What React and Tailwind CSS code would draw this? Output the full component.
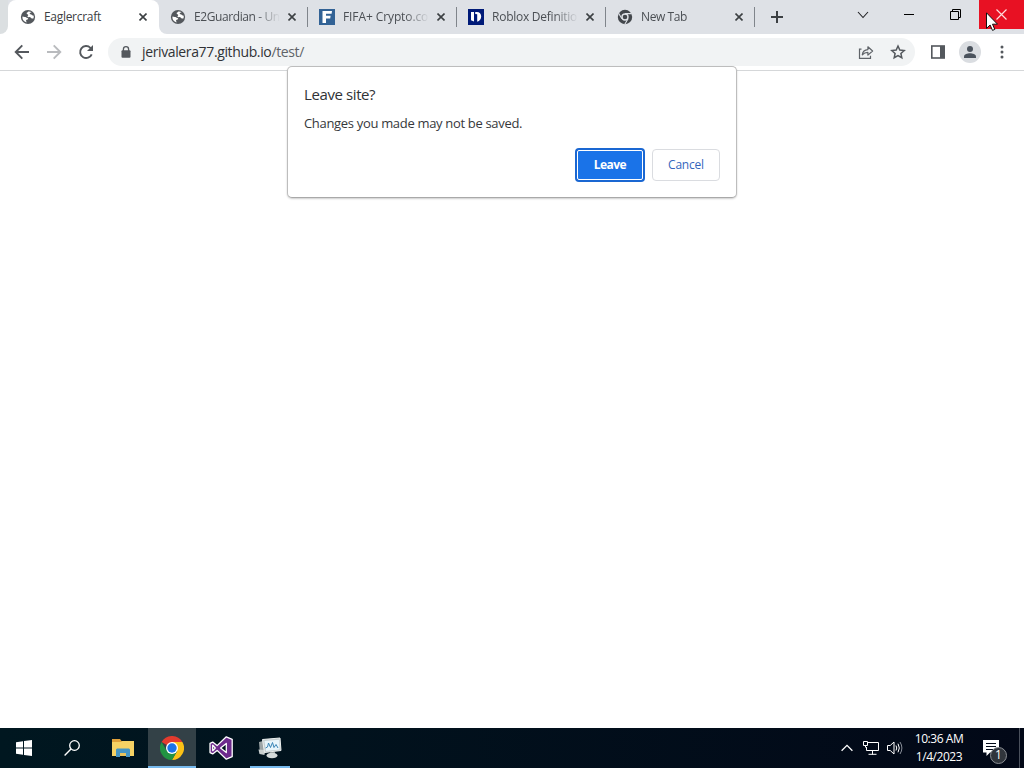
const tabs = [
  { title: 'Eaglercraft', icon: GlobeIcon, active: true, width: 'w-[60px]', fit: 'tracking-[-0.3px]' },
  { title: 'E2Guardian - Un', icon: GlobeIcon, width: 'w-[86px]', fit: 'tracking-[-0.4px]' },
  { title: 'FIFA+ Crypto.co', icon: FifaIcon, width: 'w-[86px]', fit: 'tracking-[-0.1px]' },
  { title: 'Roblox Definitio', icon: DictionaryIcon, width: 'w-[86px]', fit: 'tracking-[-0.25px]' },
  { title: 'New Tab', icon: ChromeMonoIcon, width: 'w-[86px]', fit: 'tracking-[-0.4px]' },
]

function GlobeIcon() {
  return (
    <svg className="w-4 h-4" viewBox="0 0 16 16">
      <circle cx="8" cy="8" r="7.1" fill="#54585d" />
      <path d="M2.5 7.6c1.7.5 2.9.3 3.7 1 .6.5 1.9.2 2 1.2.1.9-1.7.5-2.1 1.4-.3.7.6 1.2.4 2.2C4 12.8 2 10.500 2.500 7.600z" fill="#fff" />
      <path d="M8.300 2.400c1.500-.1 2.500.3 3.300.8-.9.3-1.900.5-1.900 1.300.1.900 1.300.8 2 1.300.6.500 1 .9 2 .9.200 1.100 0 2-.3 2.700-.7.1-1.300.3-2-.1-.9-.5-.9-1.200-2-1.200-.8 0-1 .3-1.700-.2-.8-.7.700-1.100.500-2C8 5.100 6.600 5.300 6.600 4.200c0-.9 1.300-.7 1.700-1.800z" fill="#fff" />
    </svg>
  )
}

function FifaIcon() {
  return (
    <svg className="w-4 h-4" viewBox="0 0 16 16">
      <rect width="16" height="16" fill="#326295" />
      <path d="M3.500 2H13l-.4 2.800H7v2h4.600l-.4 2.600H7V14H3.500z" fill="#fff" />
    </svg>
  )
}

function DictionaryIcon() {
  return (
    <svg className="w-4 h-4" viewBox="0 0 16 16">
      <rect width="16" height="16" fill="#001a78" />
      <path d="M3 3h3v9.500L3 11.300zM7.200 3h1.600c2.800 0 4.400 1.800 4.400 4.500 0 2.600-1.500 4.600-4 5.200V5.200l-2-.3z" fill="#fff" />
    </svg>
  )
}

function ChromeMonoIcon() {
  return (
    <svg className="w-4 h-4" viewBox="0 0 16 16">
      <circle cx="8" cy="8" r="7.200" fill="#43474c" />
      <circle cx="8" cy="8" r="3" fill="#43474c" stroke="#dee1e6" strokeWidth="1.400" />
      <path d="M8 4.600h6.600M4.900 9.800L1.600 4.200M11 9.800l-3.300 5.700" stroke="#dee1e6" strokeWidth="1.100" />
    </svg>
  )
}

function CloseX() {
  return (
    <svg className="w-2 h-2 shrink-0" viewBox="0 0 8 8">
      <path d="M.5.5l7 7M7.5.5l-7 7" stroke="#3c4043" strokeWidth="1.6" />
    </svg>
  )
}

function Tab({ tab }) {
  const Icon = tab.icon
  return (
    <div
      className={
        tab.active
          ? 'relative z-10 flex w-[151px] h-[34px] items-center rounded-t-lg bg-white pl-3 text-[#3c4043]'
          : 'flex w-[149px] h-[34px] items-center pl-[11px] text-[#4b4f54]'
      }
    >
      <Icon />
      <div className="ml-2 w-[89px]">
        <div
          className={`h-4 whitespace-nowrap text-[12px] leading-4 ${tab.width} ${tab.fit} ${
            tab.active ? '' : '[mask-image:linear-gradient(to_right,black_62px,transparent_86px)]'
          }`}
        >
          {tab.title}
        </div>
      </div>
      <div className={tab.active ? 'ml-[6px]' : 'ml-[5px]'}>
        <CloseX />
      </div>
      {!tab.active && <div className="ml-[11px] h-5 w-px bg-[#80858b]" />}
    </div>
  )
}

function TabStrip() {
  return (
    <div className="flex h-[34px] bg-[#dee1e6]">
      <div className="w-2 bg-white">
        <div className="h-full rounded-br-lg bg-[#dbdfe1]" />
      </div>
      <Tab tab={tabs[0]} />
      <div className="-mr-2 w-2 bg-white">
        <div className="h-full rounded-bl-lg bg-[#dee1e6]" />
      </div>
      {tabs.slice(1).map((tab) => (
        <Tab key={tab.title} tab={tab} />
      ))}
      <div className="flex flex-1 items-center pl-4">
        <svg className="w-3 h-3" viewBox="0 0 12 12">
          <path d="M6 0v12M0 6h12" stroke="#3c4043" strokeWidth="2" />
        </svg>
      </div>
      <div className="flex h-[29px]">
        <div className="flex w-[46px] items-center justify-center">
          <svg className="w-3 h-3" viewBox="0 0 12 12">
            <path d="M1 3l5 5.5L11 3" stroke="#202124" strokeWidth="1.1" fill="none" />
          </svg>
        </div>
        <div className="flex w-[46px] items-center justify-center">
          <div className="h-px w-[10px] bg-black" />
        </div>
        <div className="flex w-[46px] items-center justify-center">
          <svg className="w-[11px] h-[11px]" viewBox="0 0 11 11">
            <path d="M.5 2.5h8v8h-8zM2.5 2.5v-2h8v8h-2" stroke="#000" fill="none" />
          </svg>
        </div>
        <div className="relative ml-px flex w-[45px] items-center justify-center bg-[#e81123]">
          <svg className="w-[11px] h-[11px]" viewBox="0 0 11 11">
            <path d="M.5.5l10 10M10.5.5l-10 10" stroke="#ffdcdc" strokeWidth="1.2" />
          </svg>
          <svg className="absolute left-[7px] top-3 z-20 w-3 h-[19px]" viewBox="0 0 12 19">
            <path d="M.5.8v15.6l3.6-3.4 2.4 5.4 2.3-1-2.3-5.2h5z" fill="#fff" stroke="#111" strokeWidth="1" />
          </svg>
        </div>
      </div>
    </div>
  )
}

function Toolbar() {
  return (
    <div className="flex h-[37px] items-center border-b border-[#d5d7d9] bg-white pl-[14px]">
      <svg className="w-4 h-4" viewBox="0 0 16 16">
        <path d="M15 8H2M8.3 1.4L1.7 8l6.6 6.6" stroke="#54585d" strokeWidth="1.9" fill="none" />
      </svg>
      <svg className="ml-4 w-4 h-4" viewBox="0 0 16 16">
        <path d="M1 8h13M7.7 1.4L14.3 8l-6.6 6.6" stroke="#b9bbbe" strokeWidth="1.9" fill="none" />
      </svg>
      <svg className="ml-4 w-4 h-4" viewBox="0 0 16 16">
        <path d="M13.7 10.3A6 6 0 1 1 12.4 3.8L14 5.4" stroke="#54585d" strokeWidth="1.9" fill="none" />
        <path d="M15 1v6H9z" fill="#54585d" />
      </svg>
      <div className="ml-[14px] flex h-7 w-[807px] items-center rounded-full bg-[#f1f3f4] pl-[13px]">
        <svg className="w-[10px] h-3" viewBox="0 0 10 12">
          <path d="M2.4 5V3.3a2.6 2.6 0 0 1 5.2 0V5" stroke="#54585d" strokeWidth="1.3" fill="none" />
          <rect x=".5" y="4.2" width="9" height="7.6" rx="1" fill="#54585d" />
        </svg>
        <div className="ml-[11px] flex-1 whitespace-nowrap text-[14px] leading-5 tracking-[-0.37px] text-[#303236]">
          jerivalera77.github.io<span className="text-[#5f6368]">/test/</span>
        </div>
        <svg className="w-4 h-4" viewBox="0 0 16 16">
          <path d="M1.5 4.5v9.8h11v-2.5M1.5 5.2h2" stroke="#5f6368" strokeWidth="1.2" fill="none" />
          <path d="M4.3 10.8c.4-3.3 2.2-5 5.6-5.2V2.8L14.6 7l-4.7 4.1V8.4c-2.400 0-4.100.7-5.600 2.400z" stroke="#5f6368" strokeWidth="1.2" fill="none" strokeLinejoin="round" />
        </svg>
        <svg className="ml-4 mr-[9px] w-4 h-4" viewBox="0 0 16 16">
          <path d="M8 2l1.800 4 4.400.5-3.300 2.900.9 4.300L8 11.500l-3.800 2.200.9-4.300-3.300-2.900L6.200 6z" stroke="#54585d" strokeWidth="1.5" fill="none" />
        </svg>
      </div>
      <svg className="ml-4 w-[14px] h-[14px]" viewBox="0 0 14 14">
        <rect x=".8" y="1" width="12.4" height="12" stroke="#54585d" strokeWidth="1.6" fill="none" />
        <path d="M9 1h4v12H9z" fill="#54585d" />
      </svg>
      <div className="ml-[14px] flex h-[22px] w-[22px] items-center justify-center rounded-full bg-[#dadde1]">
        <svg className="w-3 h-3" viewBox="0 0 12 12">
          <circle cx="6" cy="3" r="3" fill="#4b535d" />
          <path d="M0 12v-1.6C0 8.5 3.5 7.3 6 7.3s6 1.2 6 3.1V12z" fill="#4b535d" />
        </svg>
      </div>
      <svg className="ml-[19px] w-1 h-[14px]" viewBox="0 0 4 14">
        <circle cx="2" cy="2" r="1.5" fill="#54585d" />
        <circle cx="2" cy="7" r="1.5" fill="#54585d" />
        <circle cx="2" cy="12" r="1.5" fill="#54585d" />
      </svg>
    </div>
  )
}

function LeaveDialog() {
  return (
    <div className="absolute left-[287px] top-[66px] z-20 h-[132px] w-[450px] rounded-[5px] border border-[#bdbdbd] border-b-[#a9a9a9] bg-white px-4 pt-[17px] shadow-[0_1px_2px_rgba(0,0,0,0.2)]">
      <h1 className="text-[15px] leading-5 tracking-[-0.4px] text-[#303236]">Leave site?</h1>
      <p className="mt-[9px] text-[13px] leading-5 tracking-[-0.32px] text-[#36383b]">Changes you made may not be saved.</p>
      <div className="mt-[15px] flex items-center justify-end gap-[7px] text-[12px]">
        <button className="h-[34px] w-[70px] rounded-[4px] bg-[#1a67d2] p-[2px]">
          <span className="flex h-full items-center justify-center rounded-[2px] border border-white bg-[#1a73e8] font-bold tracking-[-0.55px] text-white">
            Leave
          </span>
        </button>
        <button className="h-8 w-[68px] rounded-[4px] border border-[#dadce0] font-medium tracking-[-0.2px] text-[#3566bd]">
          Cancel
        </button>
      </div>
    </div>
  )
}

function Taskbar() {
  return (
    <div className="flex h-10 bg-linear-to-r from-[#001720] to-[#020817] text-white">
      <div className="flex w-12 items-center justify-center">
        <svg className="w-4 h-4" viewBox="0 0 16 16">
          <path d="M0 2.3l7-1v6.2H0zM8 1.1L16 0v7.5H8zM0 8.5h7v6.2l-7-1zM8 8.5h8V16l-8-1.1z" fill="#fff" />
        </svg>
      </div>
      <div className="flex w-12 items-center justify-center">
        <svg className="w-4 h-4" viewBox="0 0 16 16">
          <circle cx="10.5" cy="5.5" r="4.8" stroke="#fff" strokeWidth="1.3" fill="none" />
          <path d="M7 9L.6 15.4" stroke="#fff" strokeWidth="1.4" />
        </svg>
      </div>
      <div className="flex w-[52px] items-center justify-center pl-[2px]">
        <svg className="w-[22px] h-[18px]" viewBox="0 0 22 18">
          <path d="M0 0h8l1.5 2H22v15H0z" fill="#e0a13a" />
          <path d="M0 3h9l1.5-1H22v15H0z" fill="#f6d264" />
          <path d="M4 18v-7.500L5 9.500h12l1 1V18h-4v-4H8v4z" fill="#4595c4" />
          <path d="M8 14h6v3H8z" fill="#e9c35c" />
        </svg>
      </div>
      <div className="flex h-10 w-12 items-center justify-center border-b-2 border-[#76b9ed] bg-[#334147] pt-[2px]">
        <svg className="w-6 h-6" viewBox="0 0 24 24">
          <path d="M12 12L1.6 6A12 12 0 0 1 22.4 6z" fill="#e33b2e" />
          <path d="M12 12V6h10.4A12 12 0 0 1 12 24l5.2-9z" fill="#fbc116" />
          <path d="M12 12l5.2 3L12 24A12 12 0 0 1 1.6 6l5.200 9z" fill="#229342" />
          <circle cx="12" cy="12" r="6" fill="#fff" />
          <circle cx="12" cy="12" r="4.7" fill="#1a73e8" />
        </svg>
      </div>
      <div className="flex w-[50px] items-center justify-center">
        <svg className="w-6 h-6" viewBox="0 0 24 24">
          <path
            d="M17.300.8l5.900 2.500v17.400l-5.900 2.500-9.200-8.800-4.400 3.500-2.700-1.300V7.400l2.700-1.300 4.400 3.500zM17.300 7.400L11.600 12l5.700 4.600zM3.700 9.300v5.400L6.300 12z"
            fill="#6d2a8c"
            fillRule="evenodd"
            stroke="#fff"
            strokeWidth="1.300"
            strokeLinejoin="round"
          />
        </svg>
      </div>
      <div className="ml-1 flex h-10 w-10 items-center justify-center border-b-2 border-[#76b9ed] pt-[2px]">
        <svg className="w-6 h-[22px]" viewBox="0 0 24 22">
          <path d="M1 5l6-1.500v13L2 17z" fill="#9ca4a6" />
          <path d="M.5 12.500l6 .5v5l-5-1z" fill="#c9cfcf" />
          <path d="M4.500 2.500L22 1l1 12.500-16.500 2z" fill="#c6ced0" stroke="#eef1f0" />
          <path d="M6.500 4L21 2.800l.7 9.700L8 14z" fill="#e8f5fb" />
          <path d="M7.500 11l2-1 1-4 2 4.500 2-5 1.500 5 2-3 2 3.500" stroke="#3984b6" strokeWidth="1" fill="none" />
          <path d="M12 15h5v2h-5z" fill="#979e9e" />
          <ellipse cx="14" cy="18.500" rx="5.500" ry="2.800" fill="#d5dada" />
        </svg>
      </div>
      <div className="ml-auto flex items-center">
        <svg className="w-3 h-2" viewBox="0 0 12 8">
          <path d="M.6 6.8L6 1.4l5.4 5.4" stroke="#fff" strokeWidth="1.3" fill="none" />
        </svg>
        <svg className="ml-[10px] w-4 h-[14px]" viewBox="0 0 16 14">
          <path d="M5 1.500h10.500v8h-12V6M9.500 9.500v4M5.500 13.300h8" stroke="#fff" fill="none" />
          <path d="M.5.500h4v4h-4zM2.500 4.500v2" stroke="#fff" fill="none" />
        </svg>
        <svg className="ml-2 w-4 h-[14px]" viewBox="0 0 16 14">
          <path d="M.5 4.5h2.7L7 1v12L3.2 9.5H.5z" stroke="#fff" fill="none" />
          <path d="M9 4.5q1.5 2.5 0 5M11 2.7q2.6 4.3 0 8.6" stroke="#fff" fill="none" />
          <path d="M13 1q3.8 6 0 12" stroke="#888e98" fill="none" />
        </svg>
        <div className="ml-[7px] w-[58px] whitespace-nowrap text-center text-[12px] leading-[18px] tracking-[-0.45px]">
          <div>10:36 AM</div>
          <div>1/4/2023</div>
        </div>
        <div className="relative ml-[15px] h-[17px] w-4">
          <svg className="w-4 h-[17px]" viewBox="0 0 16 17">
            <path d="M0 0h16v12.5H7L3.5 16v-3.5H0z" fill="#fff" />
            <path d="M3 3.5h10M3 6.5h10M3 9.5h7" stroke="#020a18" />
          </svg>
          <div className="absolute left-[7px] top-[7px] flex h-[17px] w-[17px] items-center justify-center rounded-full border border-[#8b8f95] bg-[#30353c] text-[12px] leading-none">
            1
          </div>
        </div>
        <div className="ml-5 mr-1 h-10 w-px bg-[#4a505c]" />
      </div>
    </div>
  )
}

export default function App() {
  return (
    <div className="relative flex h-screen w-full flex-col overflow-hidden bg-white font-['Open_Sans',sans-serif]">
      <TabStrip />
      <Toolbar />
      <main className="flex-1 bg-white" />
      <LeaveDialog />
      <Taskbar />
    </div>
  )
}
